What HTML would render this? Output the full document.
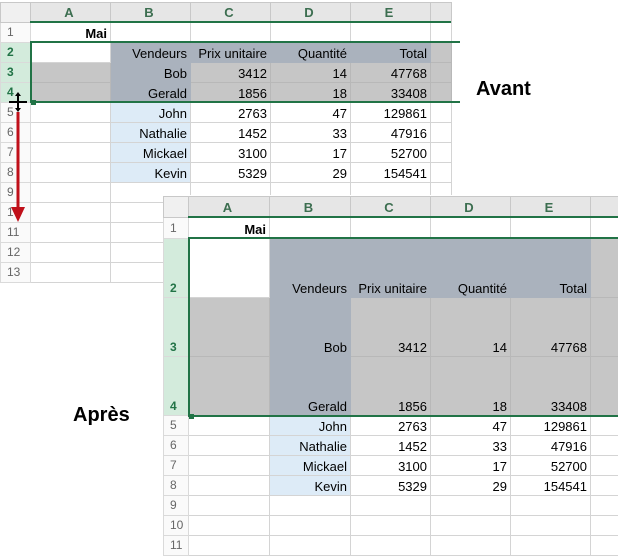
<!DOCTYPE html>
<html><head><style>
body{margin:0;width:618px;height:547px;background:#fff;position:relative;overflow:hidden;font-family:"Liberation Sans",sans-serif;}
table{border-collapse:collapse;table-layout:fixed;position:absolute;font-size:13px;}
td{border:1px solid #d4d4d4;padding:0 3px 0 0;text-align:right;white-space:nowrap;overflow:visible;vertical-align:bottom;color:#000;height:19px;line-height:17px;}
tr.h td{background:#e6e6e6;text-align:center;font-weight:bold;color:#3c6e50;vertical-align:middle;border-color:#c8c8c8;}
td.rn{background:#fafafa;text-align:left;padding-left:6px;color:#666;font-size:12px;vertical-align:middle;border-color:#dadada;}
td.rs{background:#d3ebdc;color:#217346;font-weight:bold;}
.bg{background:#aab2bd;border-color:#aab2bd;}
.gr{background:#c6c6c6;border-color:#b8b8b8;}
.lb{background:#ddebf7;}
.sel{position:absolute;border:2px solid #217346;box-sizing:border-box;}
.lbl{position:absolute;font-weight:bold;font-size:20px;}
</style></head><body>
<table style="left:0;top:2px;width:451px">
<col style="width:30px"><col style="width:80px"><col style="width:80px"><col style="width:80px"><col style="width:80px"><col style="width:80px"><col style="width:21px">
<tr class="h"><td style="height:18px;background:#f0f0f0"></td><td>A</td><td>B</td><td>C</td><td>D</td><td>E</td><td></td></tr>
<tr><td class="rn">1</td><td><b>Mai</b></td><td></td><td></td><td></td><td></td><td></td></tr>
<tr><td class="rn rs">2</td><td></td><td class="bg">Vendeurs</td><td class="bg">Prix unitaire</td><td class="bg">Quantité</td><td class="bg">Total</td><td class="gr"></td></tr>
<tr><td class="rn rs">3</td><td class="gr"></td><td class="bg">Bob</td><td class="gr">3412</td><td class="gr">14</td><td class="gr">47768</td><td class="gr"></td></tr>
<tr><td class="rn rs">4</td><td class="gr"></td><td class="bg">Gerald</td><td class="gr">1856</td><td class="gr">18</td><td class="gr">33408</td><td class="gr"></td></tr>
<tr><td class="rn">5</td><td></td><td class="lb">John</td><td>2763</td><td>47</td><td>129861</td><td></td></tr>
<tr><td class="rn">6</td><td></td><td class="lb">Nathalie</td><td>1452</td><td>33</td><td>47916</td><td></td></tr>
<tr><td class="rn">7</td><td></td><td class="lb">Mickael</td><td>3100</td><td>17</td><td>52700</td><td></td></tr>
<tr><td class="rn">8</td><td></td><td class="lb">Kevin</td><td>5329</td><td>29</td><td>154541</td><td></td></tr>
<tr><td class="rn">9</td><td></td><td></td><td></td><td></td><td></td><td></td></tr>
<tr><td class="rn">10</td><td></td><td></td><td></td><td></td><td></td><td></td></tr>
<tr><td class="rn">11</td><td></td><td></td><td></td><td></td><td></td><td></td></tr>
<tr><td class="rn">12</td><td></td><td></td><td></td><td></td><td></td><td></td></tr>
<tr><td class="rn">13</td><td></td><td></td><td></td><td></td><td></td><td></td></tr>
</table>
<div style="position:absolute;left:30px;top:21px;width:421px;height:2px;background:#217346"></div>
<div class="sel" style="left:30px;top:41px;width:430px;height:62px;border-right:none"></div>
<div style="position:absolute;left:31px;top:100px;width:5px;height:5px;background:#217346"></div>
<svg style="position:absolute;left:0;top:90px" width="40" height="140">
<line x1="18" y1="22" x2="18" y2="118" stroke="#c0101a" stroke-width="3"/>
<polygon points="11,117 25,117 18,132" fill="#c0101a"/>
<line x1="9" y1="12" x2="27" y2="12" stroke="#000" stroke-width="2"/>
<line x1="18" y1="4" x2="18" y2="20" stroke="#000" stroke-width="2"/>
<polygon points="15,6 21,6 18,2" fill="#000"/><polygon points="15,18 21,18 18,22" fill="#000"/>
</svg>
<div class="lbl" style="left:476px;top:78px">Avant</div>

<div style="position:absolute;left:163px;top:195px;width:455px;height:352px;background:#fff"></div>
<table style="left:163px;top:196px;width:455px">
<col style="width:25px"><col style="width:81px"><col style="width:81px"><col style="width:80px"><col style="width:80px"><col style="width:80px"><col style="width:28px">
<tr class="h"><td style="height:20px;background:#f0f0f0"></td><td>A</td><td>B</td><td>C</td><td>D</td><td>E</td><td></td></tr>
<tr><td class="rn" style="height:20px">1</td><td><b>Mai</b></td><td></td><td></td><td></td><td></td><td></td></tr>
<tr><td class="rn rs" style="height:58px;vertical-align:bottom">2</td><td></td><td class="bg">Vendeurs</td><td class="bg">Prix unitaire</td><td class="bg">Quantité</td><td class="bg">Total</td><td class="gr"></td></tr>
<tr><td class="rn rs" style="height:58px;vertical-align:bottom">3</td><td class="gr"></td><td class="bg">Bob</td><td class="gr">3412</td><td class="gr">14</td><td class="gr">47768</td><td class="gr"></td></tr>
<tr><td class="rn rs" style="height:58px;vertical-align:bottom">4</td><td class="gr"></td><td class="bg">Gerald</td><td class="gr">1856</td><td class="gr">18</td><td class="gr">33408</td><td class="gr"></td></tr>
<tr><td class="rn">5</td><td></td><td class="lb">John</td><td>2763</td><td>47</td><td>129861</td><td></td></tr>
<tr><td class="rn">6</td><td></td><td class="lb">Nathalie</td><td>1452</td><td>33</td><td>47916</td><td></td></tr>
<tr><td class="rn">7</td><td></td><td class="lb">Mickael</td><td>3100</td><td>17</td><td>52700</td><td></td></tr>
<tr><td class="rn">8</td><td></td><td class="lb">Kevin</td><td>5329</td><td>29</td><td>154541</td><td></td></tr>
<tr><td class="rn">9</td><td></td><td></td><td></td><td></td><td></td><td></td></tr>
<tr><td class="rn">10</td><td></td><td></td><td></td><td></td><td></td><td></td></tr>
<tr><td class="rn">11</td><td></td><td></td><td></td><td></td><td></td><td></td></tr>
</table>
<div style="position:absolute;left:188px;top:216px;width:430px;height:2px;background:#217346"></div>
<div class="sel" style="left:188px;top:237px;width:440px;height:180px;border-right:none"></div>
<div style="position:absolute;left:189px;top:414px;width:5px;height:5px;background:#217346"></div>
<div class="lbl" style="left:73px;top:404px">Après</div>
</body></html>
